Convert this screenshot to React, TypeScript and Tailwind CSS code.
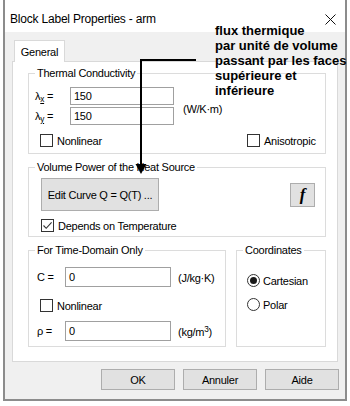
import React from "react";

function Check({ checked, label }: { checked?: boolean; label: string }) {
  return (
    <div className="flex items-center h-[15px] gap-[4px]">
      <div className="w-[13px] h-[13px] border border-[#333333] bg-white flex items-center justify-center">
        {checked && (
          <svg width="11" height="11" viewBox="0 0 11 11">
            <path d="M1.5 5.5 L4.2 8.3 L9.6 2.4" stroke="#333333" strokeWidth="1.1" fill="none" />
          </svg>
        )}
      </div>
      <span>{label}</span>
    </div>
  );
}

function Radio({ selected, label }: { selected?: boolean; label: string }) {
  return (
    <div className="flex items-center h-[15px] gap-[3px]">
      <div className="w-[13px] h-[13px] rounded-full border border-[#333333] bg-white flex items-center justify-center">
        {selected && <div className="w-[7px] h-[7px] rounded-full bg-[#1a1a1a]" />}
      </div>
      <span>{label}</span>
    </div>
  );
}

function Field({ value, w, h }: { value: string; w: string; h: string }) {
  return (
    <div className={`${w} ${h} border border-[#a0a0a0] bg-white pl-[3px] flex items-center`}>{value}</div>
  );
}

export default function App() {
  return (
    <div className="relative w-[350px] h-[406px] bg-white overflow-hidden font-['Liberation_Sans',Arial,sans-serif] text-[11px] leading-[14px] tracking-[-0.25px] text-black">
      <div className="ml-[3px] w-[344px] h-[401px] border-x-2 border-b-2 border-[#8c8c8c] flex flex-col">
        {/* Title bar */}
        <div className="h-[32px] bg-white flex items-center justify-between pl-[5px] pr-[9px] pt-[6px] shrink-0">
          <span className="text-[12px] tracking-[-0.2px]">Block Label Properties - arm</span>
          <svg width="11" height="11" viewBox="0 0 11 11">
            <path d="M0.5 0.5 L10.5 10.5 M10.5 0.5 L0.5 10.5" stroke="#111" strokeWidth="1" />
          </svg>
        </div>
        {/* Body */}
        <div className="flex-1 bg-[#f0f0f0] flex flex-col pt-[8px]">
          <div className="ml-[9px] w-[51px] h-[22px] bg-white border-x border-t border-[#d9d9d9] relative z-10 -mb-[1px] flex items-center justify-center">
            General
          </div>
          <div className="ml-[7px] w-[326px] h-[301px] bg-white border border-[#d9d9d9] pt-[4px] pl-[15px] pr-[11px] flex flex-col">
            {/* Thermal Conductivity */}
            <fieldset className="h-[88px] border border-[#dcdcdc]">
              <legend className="ml-[6px] px-[2px] leading-[14px]">Thermal Conductivity</legend>
              <div className="pt-[7px]">
                <div className="flex">
                  <div className="flex flex-col gap-[2px] pl-[6px]">
                    <div className="flex items-center h-[18px]">
                      <span className="w-[35px]">
                        λ<sub className="underline">x</sub> =
                      </span>
                      <Field value="150" w="w-[104px]" h="h-[18px]" />
                    </div>
                    <div className="flex items-center h-[18px]">
                      <span className="w-[35px]">
                        λ<sub className="underline">y</sub> =
                      </span>
                      <Field value="150" w="w-[104px]" h="h-[18px]" />
                    </div>
                  </div>
                  <span className="ml-[9px] mt-[15px]">(W/K·m)</span>
                </div>
                <div className="flex mt-[8px] ml-[11px]">
                  <div className="w-[207px]">
                    <Check label="Nonlinear" />
                  </div>
                  <Check label="Anisotropic" />
                </div>
              </div>
            </fieldset>

            {/* Volume Power */}
            <fieldset className="mt-[6px] h-[77px] border border-[#dcdcdc]">
              <legend className="ml-[6px] px-[2px] leading-[14px]">Volume Power of the Heat Source</legend>
              <div className="pt-[4px]">
                <div className="flex items-center ml-[12px]">
                  <div className="w-[118px] h-[33px] bg-[#e1e1e1] border border-[#adadad] flex items-center justify-center">
                    Edit Curve Q = Q(T) ...
                  </div>
                  <div className="ml-[131px] w-[25px] h-[24px] bg-[#e1e1e1] border border-[#adadad] flex items-center justify-center font-['Liberation_Serif',serif] font-bold italic text-[17px]">
                    f
                  </div>
                </div>
                <div className="mt-[7px] ml-[12px]">
                  <Check checked label="Depends on Temperature" />
                </div>
              </div>
            </fieldset>

            {/* Bottom groups */}
            <div className="mt-[6px] flex gap-[10px]">
              <fieldset className="w-[198px] h-[104px] border border-[#dcdcdc]">
                <legend className="ml-[6px] px-[2px] leading-[14px]">For Time-Domain Only</legend>
                <div className="pt-[10px]">
                  <div className="flex items-center h-[20px]">
                    <span className="ml-[8px] w-[28px]">C =</span>
                    <Field value="0" w="w-[106px]" h="h-[20px]" />
                    <span className="ml-[7px] mt-[2px]">(J/kg·K)</span>
                  </div>
                  <div className="mt-[11px] ml-[11px]">
                    <Check label="Nonlinear" />
                  </div>
                  <div className="mt-[8px] flex items-center h-[20px]">
                    <span className="ml-[8px] w-[28px]">ρ =</span>
                    <Field value="0" w="w-[106px]" h="h-[20px]" />
                    <span className="ml-[7px] mt-[2px]">
                      (kg/m<sup>3</sup>)
                    </span>
                  </div>
                </div>
              </fieldset>
              <fieldset className="w-[90px] h-[104px] border border-[#dcdcdc]">
                <legend className="ml-[6px] px-[2px] leading-[14px]">Coordinates</legend>
                <div className="pt-[16px] ml-[10px]">
                  <Radio selected label="Cartesian" />
                  <div className="mt-[9px]">
                    <Radio label="Polar" />
                  </div>
                </div>
              </fieldset>
            </div>
          </div>

          {/* Buttons */}
          <div className="mt-[7px] flex justify-end gap-[8px] pr-[6px]">
            <div className="w-[74px] h-[21px] bg-[#e1e1e1] border border-[#adadad] flex items-center justify-center">OK</div>
            <div className="w-[74px] h-[21px] bg-[#e1e1e1] border border-[#adadad] flex items-center justify-center">Annuler</div>
            <div className="w-[74px] h-[21px] bg-[#e1e1e1] border border-[#adadad] flex items-center justify-center">Aide</div>
          </div>
        </div>
      </div>

      {/* Annotation arrow */}
      <svg className="absolute left-0 top-0 pointer-events-none z-20" width="350" height="406" viewBox="0 0 350 406">
        <path d="M196 60 L141 60 L141 166" stroke="#000" strokeWidth="2" fill="none" />
        <polygon points="135.5,164 146.5,164 141,174" fill="#000" />
      </svg>

      {/* Annotation text */}
      <div className="absolute left-[215px] top-[23px] z-30 whitespace-pre font-bold text-[13px] leading-[15px] tracking-normal">
        {"flux thermique\npar unité de volume\npassant par les faces\nsupérieure et\ninférieure"}
      </div>
    </div>
  );
}
